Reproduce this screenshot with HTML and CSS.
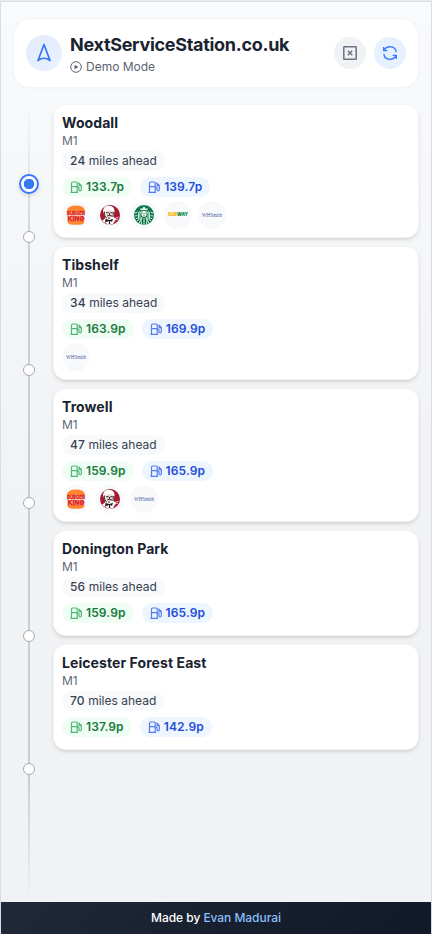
FILE: index.html
```html
<!DOCTYPE html>
<html lang="en">
<head>
<meta charset="utf-8">
<title>NextServiceStation.co.uk</title>
<link rel="stylesheet" href="styles.css">
</head>
<body>
<svg class="defs" aria-hidden="true">
  <symbol id="fuel" viewBox="0 0 12 12"><g fill="none" stroke="currentColor" stroke-width="1.2"><path d="M1.5 11.5V2.2Q1.5 1 2.7 1H6Q7.2 1 7.2 2.2V11.5M.5 11.4H8M1.5 5.6H7.2M7.2 6.2H8.1Q9 6.2 9 7.1V8.7Q9 9.8 10.1 9.8T11.3 8.7V4.6L8.4 1.8M9.2 2.6V4.6H11.2"/></g></symbol>
  <symbol id="bk" viewBox="0 0 20 20"><path fill="#ff8732" d="M1 6.2Q1 .5 10 .5T19 6.2ZM1.5 15.9H18.5Q18.5 19.7 13 19.7H7Q1.5 19.7 1.5 15.9Z"/><g fill="#e22b17" stroke="#e22b17" font-family="Inter, sans-serif" font-weight="900" text-anchor="middle"><text x="10" y="10" font-size="4.6" stroke-width=".3" textLength="18" lengthAdjust="spacingAndGlyphs">BURGER</text><text x="10" y="15.6" font-size="6.6" stroke-width=".5" textLength="16.5" lengthAdjust="spacingAndGlyphs">KING</text></g></symbol>
  <symbol id="kfc" viewBox="0 0 20 20"><circle cx="10" cy="10" r="10" fill="#a6192e"/><path fill="#fff" d="M3 6Q3.5 .8 9 .8Q14.5 1 14.5 6L13.5 12L16 14L13 19L9 20L2 16L5.5 13Z"/><path fill="#eed6ce" d="M6 6.5Q10 4 13 6.5L12 12L9 14L6.5 11Z"/><path fill="none" stroke="#24191b" stroke-width=".9" d="M6 7.7H8.7M10.3 7.7H12.7M9.5 8V10M7 11Q9 9.8 12 11M9 12.3V14M4.5 6.5Q4 11 6.8 13.5M13.5 7L12.8 12"/><path fill="#24191b" d="M5.5 14L9.5 15L13 13.7L12 17L10 15.7L10.3 19H8.8L9 16L5 17.5Z"/><path fill="none" stroke="#fff" stroke-width=".7" d="M15 13.5L18.5 12M14.7 15L18 14"/></symbol>
  <symbol id="starbucks" viewBox="0 0 20 20"><circle cx="10" cy="10" r="10" fill="#087548"/><g fill="none" stroke="#fff" stroke-width=".85"><path d="M7.2 6.5Q4.8 9 6 12T4.7 19M12.8 6.5Q15.2 9 14 12T15.3 19M5.6 6Q3.4 9 4.5 12T3 16M14.4 6Q16.6 9 15.5 12T17 16M8 12Q6.5 15 7.4 19.5M12 12Q13.5 15 12.6 19.5M10 13V20M1 8L3.5 7M.8 11L3.2 10.6M1.6 14L3.7 12.8M19 8L16.5 7M19.2 11L16.8 10.6M18.4 14L16.3 12.8"/></g><path fill="#fff" d="M7.5 7Q10 4.4 12.5 7V10.5Q10 13.5 7.5 10.5ZM6.8 5.5L6.3 3L8.2 4L10 1.3L11.8 4L13.7 3L13.2 5.5Q10 4 6.8 5.5Z"/><path fill="none" stroke="#087548" stroke-width=".7" d="M8 8.2H9.3M10.7 8.2H12M10 8V9.7M9 10.8H11"/></symbol>
  <symbol id="subway" viewBox="0 0 20 20"><text x="0" y="11.4" font-family="Inter, sans-serif" font-size="4.3" font-style="italic" font-weight="900" fill="#f5b400" textLength="20" lengthAdjust="spacingAndGlyphs">SUB<tspan fill="#0a8b45">WAY</tspan></text></symbol>
  <symbol id="smith" viewBox="0 0 20 20"><text x="0" y="11.6" font-family="Liberation Serif, serif" font-size="5.2" fill="#4a62a8" textLength="20" lengthAdjust="spacingAndGlyphs">WHSmith</text></symbol>
</svg>
<div class="app">
  <header class="header">
    <div class="mark"><svg width="24" height="24" viewBox="0 0 24 24" fill="none" stroke="currentColor" stroke-width="1.7" stroke-linejoin="round"><path d="M12 3.5L18 19.5Q12 15 6 19.5Z"/></svg></div>
    <div class="heading">
      <h1>NextServiceStation.co.uk</h1>
      <p class="mode"><svg width="12" height="12" viewBox="0 0 12 12" fill="none" stroke="currentColor"><circle cx="6" cy="6" r="5.3"/><path fill="currentColor" d="M4.8 4.2L8 6L4.8 7.8Z" stroke-width=".5"/></svg>Demo Mode</p>
    </div>
    <button class="round" aria-label="Close"><svg width="16" height="16" viewBox="0 0 16 16" fill="none" stroke="currentColor" stroke-width="1.5"><rect x="1.8" y="1.8" width="12.4" height="12.4" rx=".5"/><path d="M5.8 5.8L10.2 10.2M10.2 5.8L5.8 10.2"/></svg></button>
    <button class="round blue" aria-label="Refresh"><svg width="16" height="16" viewBox="0 0 16 16" fill="none" stroke="currentColor" stroke-width="1.35"><path d="M1.7 2V5.6H5.3M2 5.3Q4 1.7 8 1.7Q13.6 2 14.2 7.2M14.3 14V10.4H10.7M14 10.7Q12 14.3 8 14.3Q2.4 14 1.8 8.8"/></svg></button>
  </header>
  <main class="route">
    <div class="timeline"><i class="current"></i><span></span><span></span><span></span><span></span><span></span></div>
    <div class="cards">
      <article class="card"><h2>Woodall</h2><p class="road">M1</p><p class="distance"><b>24</b> miles ahead</p>
        <div class="prices"><span class="price"><svg><use href="#fuel"/></svg>133.7p</span><span class="price diesel"><svg><use href="#fuel"/></svg>139.7p</span></div>
        <div class="brands"><span><svg><use href="#bk"/></svg></span><span><svg><use href="#kfc"/></svg></span><span><svg><use href="#starbucks"/></svg></span><span><svg><use href="#subway"/></svg></span><span><svg><use href="#smith"/></svg></span></div></article>
      <article class="card"><h2>Tibshelf</h2><p class="road">M1</p><p class="distance"><b>34</b> miles ahead</p>
        <div class="prices"><span class="price"><svg><use href="#fuel"/></svg>163.9p</span><span class="price diesel"><svg><use href="#fuel"/></svg>169.9p</span></div>
        <div class="brands"><span><svg><use href="#smith"/></svg></span></div></article>
      <article class="card"><h2>Trowell</h2><p class="road">M1</p><p class="distance"><b>47</b> miles ahead</p>
        <div class="prices"><span class="price"><svg><use href="#fuel"/></svg>159.9p</span><span class="price diesel"><svg><use href="#fuel"/></svg>165.9p</span></div>
        <div class="brands"><span><svg><use href="#bk"/></svg></span><span><svg><use href="#kfc"/></svg></span><span><svg><use href="#smith"/></svg></span></div></article>
      <article class="card"><h2>Donington Park</h2><p class="road">M1</p><p class="distance"><b>56</b> miles ahead</p>
        <div class="prices"><span class="price"><svg><use href="#fuel"/></svg>159.9p</span><span class="price diesel"><svg><use href="#fuel"/></svg>165.9p</span></div></article>
      <article class="card"><h2>Leicester Forest East</h2><p class="road">M1</p><p class="distance"><b>70</b> miles ahead</p>
        <div class="prices"><span class="price"><svg><use href="#fuel"/></svg>137.9p</span><span class="price diesel"><svg><use href="#fuel"/></svg>142.9p</span></div></article>
    </div>
  </main>
  <footer>Made by&nbsp;<a>Evan Madurai</a></footer>
</div>
</body>
</html>
```
FILE: styles.css
```css
* { box-sizing: border-box; margin: 0; padding: 0; }
body { height: 934px; overflow: hidden; padding-top: 1px; background: #e7ebf1; font-family: Inter, sans-serif; color: #1a2330; }
.defs { display: none; }
.app { height: 933px; display: flex; flex-direction: column; border: 1px solid #d9dce3; border-bottom: 0; background: linear-gradient(#f9fafb, #f1f2f4 55%, #f1f2f4); }
.header { height: 68px; margin: 17px 13px 0; padding: 0 12px; flex: none; display: flex; align-items: center; background: #fff; border-radius: 16px; box-shadow: 0 0 0 1px #f3f4f6, 0 1px 3px #0000000c; }
.mark { width: 36px; height: 36px; display: grid; place-items: center; border-radius: 50%; background: linear-gradient(135deg, #e3ebfc, #e8f1ff); color: #3478f6; }
.heading { flex: 1; margin: 2px 0 0 8px; }
h1 { font-size: 18px; line-height: 22px; font-weight: 700; letter-spacing: -.3px; white-space: nowrap; }
.mode { margin-top: 3px; display: flex; align-items: center; gap: 4px; font-size: 12px; line-height: 16px; color: #5b6370; }
.round { width: 32px; height: 32px; margin-left: 8px; display: grid; place-items: center; border: 0; border-radius: 50%; background: #f1f2f5; color: #6b7280; }
.round.blue { background: #e6f0ff; color: #3478f6; }
.route { flex: 1; display: flex; padding: 18px 13px 0 17px; }
.timeline { position: relative; width: 22px; margin: -1px 14px 0 0; display: flex; flex-direction: column; align-items: center; background: linear-gradient(transparent, #c9ced6 20%, #c9ced6 85%, transparent) center / 2px 100% no-repeat; }
.timeline span { flex: none; width: 12px; height: 12px; margin-bottom: 121px; border: 1.5px solid #a5abb7; border-radius: 50%; background: #fff; }
.timeline span:first-of-type { margin-top: 127px; }
.timeline span:last-child { margin-bottom: 0; }
.current { position: absolute; top: 70px; width: 20px; height: 20px; border: 2px solid #3478f6; border-radius: 50%; background: radial-gradient(circle, #3478f6 0 4.9px, #fff 5.5px); box-shadow: 0 2px 5px #00000020; }
.cards { flex: 1; display: flex; flex-direction: column; gap: 10px; }
.card { height: 132px; padding: 8px; border-radius: 12px; background: #fff; box-shadow: 0 0 0 1px #f3f4f6, 0 2px 4px #0000002e; }
.card:nth-child(n+4) { height: 104px; }
h2 { font-size: 14px; line-height: 20px; font-weight: 700; letter-spacing: .08px; }
.road { font-size: 12px; line-height: 16px; color: #626977; }
.distance { width: fit-content; height: 20px; margin-top: 2px; padding: 0 8px; border-radius: 10px; background: #f8f9fb; font-size: 12px; line-height: 20px; color: #374151; }
.distance b { font-weight: 500; letter-spacing: .2px; }
.prices { display: flex; gap: 8px; margin-top: 6px; }
.price { height: 20px; padding: 0 8px 1px; display: flex; align-items: center; gap: 4px; border-radius: 10px; background: #effdf4; color: #187a3b; font-size: 12px; line-height: 15px; font-weight: 600; letter-spacing: .12px; }
.price svg { width: 12px; height: 12px; color: #4eb773; }
.price.diesel { background: #edf5ff; color: #1d4ed8; }
.price.diesel svg { color: #557cef; }
.brands { display: flex; gap: 6px; margin-top: 4px; }
.brands span { width: 28px; height: 28px; display: grid; place-items: center; border-radius: 50%; background: #f8f9fb; }
.brands svg { width: 20px; height: 20px; }
footer { height: 32px; flex: none; display: flex; align-items: center; justify-content: center; padding-bottom: 1px; background: linear-gradient(135deg, #1f2937, #111827); color: #fff; font-size: 12px; line-height: 15px; font-weight: 500; letter-spacing: -.05px; }
footer a { color: #8abffa; }
```
